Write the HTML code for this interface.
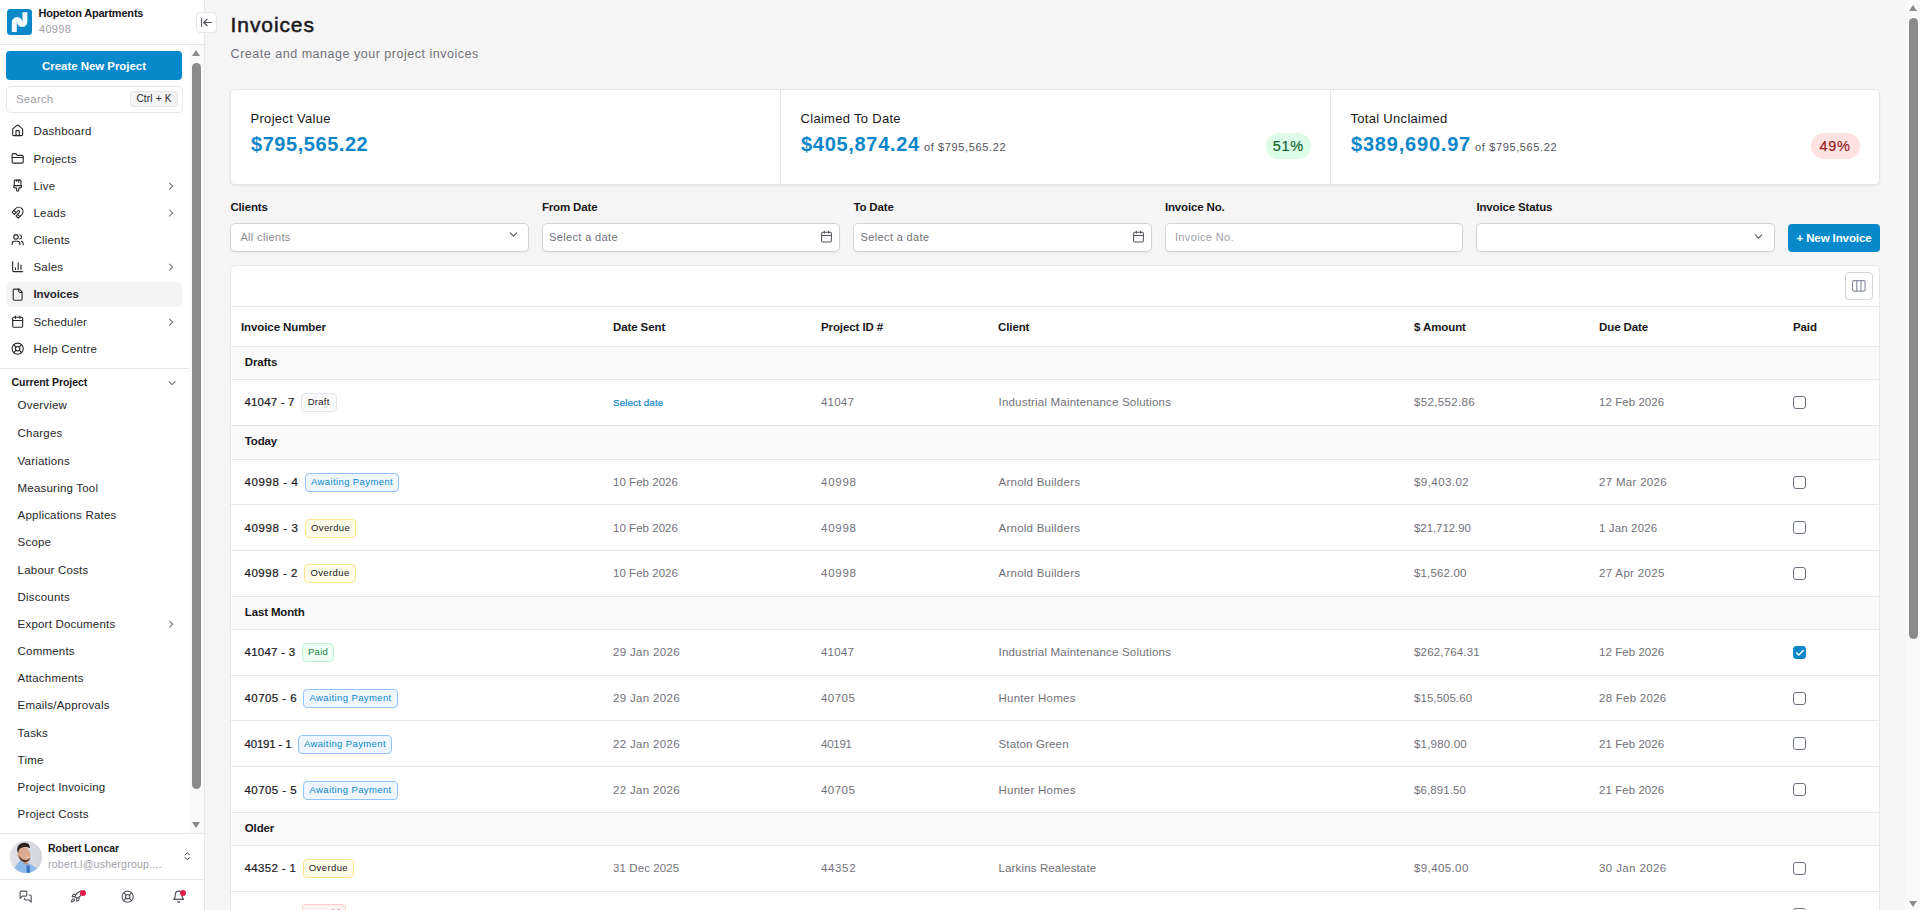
<!DOCTYPE html>
<html lang="en">
<head>
<meta charset="utf-8">
<title>Invoices</title>
<style>
*{box-sizing:border-box;margin:0;padding:0}
html,body{width:1920px;height:910px;overflow:hidden}
body{font-family:"Liberation Sans",Arial,sans-serif;background:#f5f5f5;color:#18181b;position:relative;font-size:12px}
svg.ic{fill:none;stroke:currentColor;stroke-width:2;stroke-linecap:round;stroke-linejoin:round;display:block}
.abs{position:absolute}

/* ---------- sidebar ---------- */
#side{position:absolute;left:0;top:0;width:205px;height:910px;background:#fff;border-right:1px solid #e5e7eb}
#side .hd{position:absolute;left:0;top:0;width:204px;height:45px;border-bottom:1px solid #e5e7eb}
#logo{position:absolute;left:6.550px;top:9px;width:25.300px;height:26px;border-radius:3.500px;background:#0b88c8;overflow:hidden}
.pname{position:absolute;left:38.500px;top:6px;font-size:11px;font-weight:700;color:#18181b;line-height:14px;white-space:nowrap;letter-spacing:-.2px}
.pnum{position:absolute;left:39px;top:22px;font-size:11px;color:#a1a1aa;line-height:14px;letter-spacing:.3px}
#collapse{position:absolute;left:196px;top:12px;width:21px;height:21px;border:1px solid #e5e7eb;border-radius:4px;background:#fff;color:#52525b;z-index:5}
#collapse svg{position:absolute;left:3px;top:3px}
#newproj{position:absolute;left:6px;top:51px;width:176px;height:29px;border-radius:4px;background:#0789cb;color:#fff;font-weight:700;font-size:11.500px;text-align:center;line-height:31px;letter-spacing:-.05px}
#search{position:absolute;left:5.500px;top:86px;width:177px;height:26.500px;border:1px solid #e5e7eb;border-radius:5px;background:#fff}
#search .ph{position:absolute;left:9.500px;top:4.500px;font-size:11.500px;line-height:14px;color:#a1a1aa;letter-spacing:.15px}
#search .kbd{position:absolute;right:3.500px;top:3.500px;height:16px;width:48px;border:1px solid #e5e7eb;border-radius:3px;background:#f4f4f5;font-size:10px;line-height:14px;text-align:center;color:#27272a;letter-spacing:.2px}
.nav{position:absolute;left:6px;width:176px;height:25px;border-radius:5px;color:#27272a;font-size:11.500px;line-height:26px;letter-spacing:.2px}
.nav.act{background:#f4f4f5;font-weight:700;letter-spacing:-.1px}
.nav svg.i{position:absolute;left:5px;top:5.850px;color:#27272a}
.nav span{position:absolute;left:27.500px;top:0;white-space:nowrap}
.nav svg.ch{position:absolute;right:4.400px;top:7.400px;color:#71717a}
.nav.act span{top:-1px}
.sub{position:absolute;left:6px;width:176px;height:25px;color:#27272a;font-size:11.500px;line-height:26px;letter-spacing:.2px}
.sub span{position:absolute;left:11.600px;top:0;white-space:nowrap}
.sub svg.ch{position:absolute;right:4.400px;top:7.400px;color:#71717a}
#sdiv{position:absolute;left:0;top:368px;width:190px;height:1px;background:#e5e7eb}
#cur{position:absolute;left:11.500px;top:375px;font-size:10.500px;font-weight:700;line-height:14px;color:#18181b;letter-spacing:-.05px}
#curch{position:absolute;left:165.600px;top:377.200px;color:#71717a}
/* sidebar scrollbar */
#sb{position:absolute;left:189px;top:45px;width:15px;height:788px;background:#fafafa}
#sb .th{position:absolute;left:3px;top:18px;width:9px;height:726px;border-radius:5px;background:#8b8b8b}
.tri-up{position:absolute;width:0;height:0;border-left:4.500px solid transparent;border-right:4.500px solid transparent;border-bottom:6.500px solid #8b8b8b}
.tri-dn{position:absolute;width:0;height:0;border-left:4.500px solid transparent;border-right:4.500px solid transparent;border-top:6.500px solid #8b8b8b}
#user{position:absolute;left:0;top:833px;width:204px;height:47px;border-top:1px solid #e5e7eb;border-bottom:1px solid #e5e7eb}
#avatar{position:absolute;left:10px;top:7px;width:32px;height:32px;border-radius:50%;overflow:hidden;background:#d9dbe0}
#user .n{position:absolute;left:48px;top:7px;font-size:10.500px;font-weight:700;line-height:14px;color:#18181b;letter-spacing:-.06px}
#user .e{position:absolute;left:48px;top:23px;font-size:10.500px;line-height:14px;color:#a1a1aa;letter-spacing:.25px}
#user>svg{position:absolute;left:182.250px;top:17px;color:#3f3f46}
.bi{position:absolute;top:889.850px;color:#52525b}
.dot{position:absolute;width:6px;height:6px;border-radius:50%;background:#e11d48}

/* ---------- main ---------- */
#title{position:absolute;left:230.600px;top:10px;font-size:21px;font-weight:400;-webkit-text-stroke:.5px #18181b;line-height:30px;color:#18181b;letter-spacing:.9px}
#subt{position:absolute;left:230.600px;top:45px;font-size:12.500px;line-height:18px;color:#71717a;letter-spacing:.52px;white-space:nowrap}
#stats{position:absolute;left:230px;top:89px;width:1650px;height:96px;background:#fff;border:1px solid #e5e7eb;border-radius:5px;box-shadow:0 1px 2px rgba(0,0,0,.08)}
#stats .col{position:absolute;top:0;height:94px;width:550px}
#stats .col+.col{border-left:1px solid #e5e7eb}
#stats .l{position:absolute;left:19.500px;top:20px;font-size:13px;line-height:18px;color:#18181b;letter-spacing:.3px;white-space:nowrap}
#stats .v{position:absolute;left:20px;top:40px;font-size:20px;line-height:28px;font-weight:700;color:#0b87c9;white-space:nowrap;letter-spacing:.55px}
#stats .v small{font-size:11px;font-weight:400;color:#52525b;letter-spacing:.63px;margin-left:4px}
.pct{position:absolute;top:43px;height:26px;width:45.500px;border-radius:14px;font-size:14.500px;line-height:27.500px;text-align:center;letter-spacing:.6px;-webkit-text-stroke:.2px}
.pct.pg{background:#dcfce7;color:#166534}
.pct.pr{background:#fee2e2;color:#991b1b}
#filters{position:absolute;left:230.400px;top:198px;width:1649.600px;height:56px;display:flex;gap:13.400px}
.f{flex:1 1 0;position:relative}
.f label{position:absolute;left:0;top:2px;font-size:11.500px;font-weight:700;line-height:14px;color:#18181b;white-space:nowrap;letter-spacing:-.15px}
.f .inp{position:absolute;left:0;right:0;top:25px;height:29px;border:1px solid #d1d5db;border-radius:5px;background:#fff;box-shadow:0 1px 2px rgba(0,0,0,.05)}
.f .inp span{position:absolute;left:9px;top:6px;font-size:11px;line-height:15px;color:#8b8b93;letter-spacing:.35px;white-space:nowrap}
.f .inp svg{position:absolute;color:#52525b;stroke-width:1.850}
#newinv{flex:0 0 92px;position:relative}
#newinv div{position:absolute;left:0;top:26px;width:92px;height:28px;border-radius:4px;background:#0789cb;color:#fff;font-size:11.500px;font-weight:700;line-height:29px;text-align:center;white-space:nowrap;letter-spacing:-.1px}
#card{position:absolute;left:230px;top:265px;width:1650px;height:700px;background:#fff;border:1px solid #e5e7eb;border-radius:6px;overflow:hidden}
#colbtn{position:absolute;left:1614px;top:6px;width:27.500px;height:27.500px;border:1px solid #d4d4d8;border-radius:4px;color:#52525b}
#colbtn svg{position:absolute;left:6.150px;top:7.050px}
.hr{position:absolute;left:0;width:1648px;border-top:1px solid #e5e7eb}
.th{position:absolute;top:0;font-size:11.500px;font-weight:700;line-height:40px;color:#18181b;white-space:nowrap;letter-spacing:-.1px}
.g{position:absolute;left:0;width:1648px;height:34px;border-top:1px solid #e5e7eb;background:#fafafa;font-size:11.500px;font-weight:700;line-height:31px;color:#18181b;padding-left:13.800px;letter-spacing:-.15px}
.r{position:absolute;left:0;width:1648px;height:47px;border-top:1px solid #e5e7eb;background:#fff;font-size:11.500px;line-height:44px;color:#71717a;letter-spacing:.1px}
.r>span{position:absolute;top:0;white-space:nowrap}
.r u{text-decoration:none}
.r .n{left:13.500px;color:#18181b;font-size:11.500px;letter-spacing:.2px;-webkit-text-stroke:.2px}
.r .d{left:382px;letter-spacing:0}.r .p{left:590px;letter-spacing:.5px}.r .c{left:767.500px;letter-spacing:.17px}.r .a{left:1183px;letter-spacing:.32px}.r .u{left:1368px;letter-spacing:.05px}
.r .d a{color:#0b87c9;font-size:9.800px;letter-spacing:.12px;-webkit-text-stroke:.2px}
.bd{display:inline-block;vertical-align:middle;position:relative;top:-.500px;margin-left:6.200px;height:19px;line-height:16.500px;padding:0 5.300px;border:1px solid;border-radius:4px;font-size:9.500px;font-weight:400;letter-spacing:.3px;-webkit-text-stroke:0}
.bd.dr{border-color:#e5e7eb;background:#fafafa;color:#18181b;padding:0 5.900px}
.bd.aw{border-color:#93c5fd;background:#eff6ff;color:#0b87c9;letter-spacing:.39px}
.bd.ov{border-color:#fde68a;background:#fefce8;color:#18181b;letter-spacing:.39px}
.bd.pd{border-color:#bbf7d0;background:#f0fdf4;color:#15803d}
.bd.rj{border-color:#fecaca;background:#fef2f2;color:#b91c1c;width:44.800px;text-align:center}
.cb{position:absolute;left:1562px;top:16px;width:13px;height:13px;border:1px solid #6b7280;border-radius:3px;background:#fff}
.cb.on{background:#0b87c9;border-color:#0b87c9}
.cb.on svg{position:absolute;left:.500px;top:.500px;color:#fff}
#psb{position:absolute;left:1906px;top:0;width:14px;height:910px;background:#fafafa}
#psb .t{position:absolute;left:3px;top:18px;width:9px;height:621px;border-radius:5px;background:#8b8b8b}
</style>
</head>
<body>
<div id="side">
  <div class="hd">
    <div id="logo"><svg width="25" height="26" viewBox="0 0 25 26"><path d="M4.800 23V13.200A5.300 5.300 0 0 1 15.400 13.200V3.200H20.400V12.800A5.300 5.300 0 0 1 9.800 12.800V23Z" fill="#f1f8fd"/><path d="M9.800 9.500V13" stroke="#cfe5f4" stroke-width=".5" fill="none"/></svg></div>
    <div class="pname">Hopeton Apartments</div>
    <div class="pnum">40998</div>
  </div>
  <div id="newproj">Create New Project</div>
  <div id="search"><div class="ph">Search</div><div class="kbd">Ctrl + K</div></div>
  <div class="nav" style="top:118px"><svg class="ic i" width="13.300" height="13.300" viewBox="0 0 24 24"><path d="M15 21v-8a1 1 0 0 0-1-1h-4a1 1 0 0 0-1 1v8"/><path d="M3 10a2 2 0 0 1 .709-1.528l7-5.999a2 2 0 0 1 2.582 0l7 5.999A2 2 0 0 1 21 10v9a2 2 0 0 1-2 2H5a2 2 0 0 1-2-2z"/></svg><span>Dashboard</span></div>
  <div class="nav" style="top:146px"><svg class="ic i" width="13.300" height="13.300" viewBox="0 0 24 24"><path d="M20 20a2 2 0 0 0 2-2V8a2 2 0 0 0-2-2h-7.9a2 2 0 0 1-1.69-.9L9.6 3.9A2 2 0 0 0 7.93 3H4a2 2 0 0 0-2 2v13a2 2 0 0 0 2 2Z"/><path d="M2 10h20"/></svg><span>Projects</span></div>
  <div class="nav" style="top:173px"><svg class="ic i" width="13.300" height="13.300" viewBox="0 0 24 24"><path d="M10 2v2"/><path d="M14 2v4"/><path d="M17 2a1 1 0 0 1 1 1v9H6V3a1 1 0 0 1 1-1z"/><path d="M6 12a1 1 0 0 0-1 1v1a2 2 0 0 0 2 2h2a1 1 0 0 1 1 1v2.9a2 2 0 1 0 4 0V17a1 1 0 0 1 1-1h2a2 2 0 0 0 2-2v-1a1 1 0 0 0-1-1"/></svg><span>Live</span><svg class="ic ch" width="12.250" height="12.250" viewBox="0 0 24 24"><path d="m9 18 6-6-6-6"/></svg></div>
  <div class="nav" style="top:200px"><svg class="ic i" width="13.300" height="13.300" viewBox="0 0 24 24"><path d="m6 15-4-4 6.75-6.77a7.79 7.79 0 0 1 11 11L13 22l-4-4 6.39-6.36a2.14 2.14 0 0 0-3-3L6 15"/><path d="m5 8 4 4"/><path d="m12 15 4 4"/></svg><span>Leads</span><svg class="ic ch" width="12.250" height="12.250" viewBox="0 0 24 24"><path d="m9 18 6-6-6-6"/></svg></div>
  <div class="nav" style="top:227px"><svg class="ic i" width="13.300" height="13.300" viewBox="0 0 24 24"><path d="M16 21v-2a4 4 0 0 0-4-4H6a4 4 0 0 0-4 4v2"/><circle cx="9" cy="7" r="4"/><path d="M22 21v-2a4 4 0 0 0-3-3.87"/><path d="M16 3.13a4 4 0 0 1 0 7.75"/></svg><span>Clients</span></div>
  <div class="nav" style="top:254px"><svg class="ic i" width="13.300" height="13.300" viewBox="0 0 24 24"><path d="M3 3v16a2 2 0 0 0 2 2h16"/><path d="M18 17V9"/><path d="M13 17V5"/><path d="M8 17v-3"/></svg><span>Sales</span><svg class="ic ch" width="12.250" height="12.250" viewBox="0 0 24 24"><path d="m9 18 6-6-6-6"/></svg></div>
  <div class="nav act" style="top:282px"><svg class="ic i" width="13.300" height="13.300" viewBox="0 0 24 24"><path d="M15 2H6a2 2 0 0 0-2 2v16a2 2 0 0 0 2 2h12a2 2 0 0 0 2-2V7Z"/><path d="M14 2v4a2 2 0 0 0 2 2h4"/></svg><span>Invoices</span></div>
  <div class="nav" style="top:309px"><svg class="ic i" width="13.300" height="13.300" viewBox="0 0 24 24"><path d="M8 2v4"/><path d="M16 2v4"/><rect width="18" height="18" x="3" y="4" rx="2"/><path d="M3 10h18"/></svg><span>Scheduler</span><svg class="ic ch" width="12.250" height="12.250" viewBox="0 0 24 24"><path d="m9 18 6-6-6-6"/></svg></div>
  <div class="nav" style="top:336px"><svg class="ic i" width="13.300" height="13.300" viewBox="0 0 24 24"><circle cx="12" cy="12" r="10"/><path d="m4.93 4.93 4.24 4.24"/><path d="m14.83 9.17 4.24-4.24"/><path d="m14.83 14.83 4.24 4.24"/><path d="m9.17 14.83-4.24 4.24"/><circle cx="12" cy="12" r="4"/></svg><span>Help Centre</span></div>
  <div id="sdiv"></div>
  <div id="cur">Current Project</div>
  <svg id="curch" class="ic" width="12.250" height="12.250" viewBox="0 0 24 24"><path d="m6 9 6 6 6-6"/></svg>
  <div class="sub" style="top:392px"><span>Overview</span></div>
  <div class="sub" style="top:420px"><span>Charges</span></div>
  <div class="sub" style="top:448px"><span>Variations</span></div>
  <div class="sub" style="top:475px"><span>Measuring Tool</span></div>
  <div class="sub" style="top:502px"><span>Applications Rates</span></div>
  <div class="sub" style="top:529px"><span>Scope</span></div>
  <div class="sub" style="top:557px"><span>Labour Costs</span></div>
  <div class="sub" style="top:584px"><span>Discounts</span></div>
  <div class="sub" style="top:611px"><span>Export Documents</span><svg class="ic ch" width="12.250" height="12.250" viewBox="0 0 24 24"><path d="m9 18 6-6-6-6"/></svg></div>
  <div class="sub" style="top:638px"><span>Comments</span></div>
  <div class="sub" style="top:665px"><span>Attachments</span></div>
  <div class="sub" style="top:692px"><span>Emails/Approvals</span></div>
  <div class="sub" style="top:720px"><span>Tasks</span></div>
  <div class="sub" style="top:747px"><span>Time</span></div>
  <div class="sub" style="top:774px"><span>Project Invoicing</span></div>
  <div class="sub" style="top:801px"><span>Project Costs</span></div>
  <div id="sb"><div class="tri-up" style="left:3px;top:5.300px"></div><div class="th"></div><div class="tri-dn" style="left:3px;top:777.200px"></div></div>
  <div id="user">
    <div id="avatar"><svg width="32" height="33" viewBox="0 0 32 33"><defs><linearGradient id="avbg" x1="0" x2="1"><stop offset="0" stop-color="#dfe1e6"/><stop offset="1" stop-color="#d3d6dc"/></linearGradient></defs><rect width="32" height="33" fill="url(#avbg)"/><path d="M3.500 28.500L10 19.500L15 21L19.500 22.500L27.500 27.500L24 33H6Z" fill="#8fb9ea"/><path d="M12.500 18.500L17.500 19.500L18 24L14 22.500Z" fill="#c99478"/><path d="M16.200 24.400L19.600 24.200L20.200 33H16.800Z" fill="#3e76c6"/><ellipse cx="13.900" cy="13.400" rx="6.300" ry="7.500" transform="rotate(-12 13.900 13.400)" fill="#dbaa90"/><path d="M7.400 10.500C6.300 4.500 10.500 1.600 15 1.800C18.600 2 20.200 4.600 19.900 7.200C17 5.400 12.500 5.600 10 7.600C8.900 8.600 8.500 10.500 8.300 12Z" fill="#2a2421"/><path d="M8.400 14C9.300 19 12.500 21.600 16 21.100C18.600 20.600 20.100 18.600 20.300 16.400C18.500 19 15 19.600 12.500 18.200C10.500 17.100 9.400 15.500 8.400 14Z" fill="#4a372e"/><path d="M14.800 15.400Q17 16.800 19.200 15Q17.600 18 14.800 15.400Z" fill="#fff"/></svg></div>
    <div class="n">Robert Loncar</div>
    <div class="e">robert.l@ushergroup....</div>
    <svg class="ic" width="10.500" height="10.500" viewBox="0 0 24 24" style="stroke-width:2.200"><path d="m7 15 5 5 5-5"/><path d="m7 9 5-5 5 5"/></svg>
  </div>
  <svg class="ic bi" style="left:18.850px" width="13.300" height="13.300" viewBox="0 0 24 24"><path d="M14 9a2 2 0 0 1-2 2H6l-4 4V4a2 2 0 0 1 2-2h8a2 2 0 0 1 2 2z"/><path d="M18 9h2a2 2 0 0 1 2 2v11l-4-4h-6a2 2 0 0 1-2-2v-1"/></svg>
  <svg class="ic bi" style="left:69.850px" width="13.300" height="13.300" viewBox="0 0 24 24"><path d="M4.500 16.500c-1.500 1.260-2 5-2 5s3.740-.5 5-2c.71-.84.7-2.130-.09-2.910a2.180 2.180 0 0 0-2.910-.09z"/><path d="m12 15-3-3a22 22 0 0 1 2-3.950A12.880 12.880 0 0 1 22 2c0 2.720-.78 7.500-6 11a22.350 22.350 0 0 1-4 2z"/><path d="M9 12H4s.55-3.030 2-4c1.620-1.080 5 0 5 0"/><path d="M12 15v5s3.030-.55 4-2c1.080-1.620 0-5 0-5"/></svg>
  <svg class="ic bi" style="left:120.850px" width="13.300" height="13.300" viewBox="0 0 24 24"><circle cx="12" cy="12" r="10"/><path d="m4.93 4.93 4.24 4.24"/><path d="m14.83 9.17 4.24-4.24"/><path d="m14.83 14.83 4.24 4.24"/><path d="m9.17 14.83-4.24 4.24"/><circle cx="12" cy="12" r="4"/></svg>
  <svg class="ic bi" style="left:171.850px" width="13.300" height="13.300" viewBox="0 0 24 24"><path d="M6 8a6 6 0 0 1 12 0c0 7 3 9 3 9H3s3-2 3-9"/><path d="M10.300 21a1.940 1.940 0 0 0 3.400 0"/></svg>
  <div class="dot" style="left:80px;top:890px"></div>
  <div class="dot" style="left:180px;top:890px"></div>
</div>
<div id="collapse"><svg class="ic" width="13" height="13" viewBox="0 0 24 24"><path d="M3 19V5"/><path d="m13 6-6 6 6 6"/><path d="M7 12h14"/></svg></div>
<div id="title">Invoices</div>
<div id="subt">Create and manage your project invoices</div>
<div id="stats">
  <div class="col" style="left:0"><div class="l">Project Value</div><div class="v">$795,565.22</div></div>
  <div class="col" style="left:549px"><div class="l">Claimed To Date</div><div class="v" style="letter-spacing:.7px">$405,874.24<small>of $795,565.22</small></div><div class="pct pg" style="left:484.500px">51%</div></div>
  <div class="col" style="left:1099px"><div class="l">Total Unclaimed</div><div class="v" style="letter-spacing:.8px">$389,690.97<small>of $795,565.22</small></div><div class="pct pr" style="left:479.500px;width:49px">49%</div></div>
</div>
<div id="filters">
  <div class="f"><label>Clients</label><div class="inp"><span>All clients</span><svg class="ic" style="right:8px;top:4px" width="13" height="13" viewBox="0 0 24 24"><path d="m6 9 6 6 6-6"/></svg></div></div>
  <div class="f"><label>From Date</label><div class="inp"><span style="left:6.200px;color:#71717a">Select a date</span><svg class="ic" style="right:6px;top:5.800px" width="13" height="13" viewBox="0 0 24 24"><path d="M8 2v4"/><path d="M16 2v4"/><rect width="18" height="18" x="3" y="4" rx="2"/><path d="M3 10h18"/></svg></div></div>
  <div class="f"><label>To Date</label><div class="inp"><span style="left:6.200px;color:#71717a">Select a date</span><svg class="ic" style="right:6px;top:5.800px" width="13" height="13" viewBox="0 0 24 24"><path d="M8 2v4"/><path d="M16 2v4"/><rect width="18" height="18" x="3" y="4" rx="2"/><path d="M3 10h18"/></svg></div></div>
  <div class="f"><label>Invoice No.</label><div class="inp"><span style="color:#a1a1aa">Invoice No.</span></div></div>
  <div class="f"><label>Invoice Status</label><div class="inp"><svg class="ic" style="right:9px;top:6px" width="13" height="13" viewBox="0 0 24 24"><path d="m6 9 6 6 6-6"/></svg></div></div>
  <div id="newinv"><div>+ New Invoice</div></div>
</div>
<div id="card">
  <div id="colbtn"><svg width="14" height="12" viewBox="0 0 14 12" fill="none" stroke="#8a90a0" stroke-width="1.150"><rect x=".600" y=".600" width="12.500" height="10.500" rx="1.300"/><path d="M4.750 .600v10.500M9 .600v10.500"/></svg></div>
  <div class="hr" style="top:40px;height:41px">
    <span class="th" style="left:10px">Invoice Number</span><span class="th" style="left:382px">Date Sent</span><span class="th" style="left:590px">Project ID #</span><span class="th" style="left:767px">Client</span><span class="th" style="left:1183px">$ Amount</span><span class="th" style="left:1368px">Due Date</span><span class="th" style="left:1562px">Paid</span>
  </div>
  <div class="g" style="top:80px">Drafts</div>
  <div class="r" style="top:113px"><span class="n"><u style="letter-spacing:0.16px">41047 - 7</u><b class="bd dr">Draft</b></span><span class="d"><a>Select date</a></span><span class="p" style="letter-spacing:0.20px">41047</span><span class="c" style="letter-spacing:0.20px">Industrial Maintenance Solutions</span><span class="a" style="letter-spacing:0.33px">$52,552.86</span><span class="u" style="letter-spacing:0.06px">12 Feb 2026</span><i class="cb"></i></div>
  <div class="g" style="top:159px">Today</div>
  <div class="r" style="top:193px"><span class="n"><u style="letter-spacing:0.60px">40998 - 4</u><b class="bd aw">Awaiting Payment</b></span><span class="d" style="letter-spacing:0.03px">10 Feb 2026</span><span class="p" style="letter-spacing:0.74px">40998</span><span class="c" style="letter-spacing:0.25px">Arnold Builders</span><span class="a" style="letter-spacing:0.44px">$9,403.02</span><span class="u" style="letter-spacing:0.31px">27 Mar 2026</span><i class="cb"></i></div>
  <div class="r" style="top:238px;line-height:46px"><span class="n"><u style="letter-spacing:0.60px">40998 - 3</u><b class="bd ov">Overdue</b></span><span class="d" style="letter-spacing:0.03px">10 Feb 2026</span><span class="p" style="letter-spacing:0.74px">40998</span><span class="c" style="letter-spacing:0.25px">Arnold Builders</span><span class="a" style="letter-spacing:-0.07px">$21,712.90</span><span class="u" style="letter-spacing:0.13px">1 Jan 2026</span><i class="cb"></i></div>
  <div class="r" style="top:284px"><span class="n"><u style="letter-spacing:0.54px">40998 - 2</u><b class="bd ov">Overdue</b></span><span class="d" style="letter-spacing:0.03px">10 Feb 2026</span><span class="p" style="letter-spacing:0.74px">40998</span><span class="c" style="letter-spacing:0.25px">Arnold Builders</span><span class="a" style="letter-spacing:0.15px">$1,562.00</span><span class="u" style="letter-spacing:0.34px">27 Apr 2025</span><i class="cb"></i></div>
  <div class="g" style="top:330px">Last Month</div>
  <div class="r" style="top:363px"><span class="n"><u style="letter-spacing:0.26px">41047 - 3</u><b class="bd pd">Paid</b></span><span class="d" style="letter-spacing:0.34px">29 Jan 2026</span><span class="p" style="letter-spacing:0.20px">41047</span><span class="c" style="letter-spacing:0.20px">Industrial Maintenance Solutions</span><span class="a" style="letter-spacing:0.17px">$262,764.31</span><span class="u" style="letter-spacing:0.06px">12 Feb 2026</span><i class="cb on"><svg class="ic" width="10" height="10" viewBox="0 0 24 24" style="stroke-width:3.500"><path d="M20 6 9 17l-5-5"/></svg></i></div>
  <div class="r" style="top:409px"><span class="n"><u style="letter-spacing:0.44px">40705 - 6</u><b class="bd aw">Awaiting Payment</b></span><span class="d" style="letter-spacing:0.34px">29 Jan 2026</span><span class="p" style="letter-spacing:0.46px">40705</span><span class="c" style="letter-spacing:0.25px">Hunter Homes</span><span class="a" style="letter-spacing:0.06px">$15,505.60</span><span class="u" style="letter-spacing:0.26px">28 Feb 2026</span><i class="cb"></i></div>
  <div class="r" style="top:454px;line-height:46px"><span class="n"><u style="letter-spacing:-0.19px">40191 - 1</u><b class="bd aw">Awaiting Payment</b></span><span class="d" style="letter-spacing:0.34px">22 Jan 2026</span><span class="p" style="letter-spacing:-0.24px">40191</span><span class="c" style="letter-spacing:0.15px">Staton Green</span><span class="a" style="letter-spacing:0.19px">$1,980.00</span><span class="u" style="letter-spacing:0.06px">21 Feb 2026</span><i class="cb"></i></div>
  <div class="r" style="top:500px;line-height:46px"><span class="n"><u style="letter-spacing:0.44px">40705 - 5</u><b class="bd aw">Awaiting Payment</b></span><span class="d" style="letter-spacing:0.34px">22 Jan 2026</span><span class="p" style="letter-spacing:0.46px">40705</span><span class="c" style="letter-spacing:0.25px">Hunter Homes</span><span class="a" style="letter-spacing:0.10px">$6,891.50</span><span class="u" style="letter-spacing:0.06px">21 Feb 2026</span><i class="cb"></i></div>
  <div class="g" style="top:546px">Older</div>
  <div class="r" style="top:579px"><span class="n"><u style="letter-spacing:0.36px">44352 - 1</u><b class="bd ov">Overdue</b></span><span class="d" style="letter-spacing:0.09px">31 Dec 2025</span><span class="p" style="letter-spacing:0.64px">44352</span><span class="c" style="letter-spacing:0.14px">Larkins Realestate</span><span class="a" style="letter-spacing:0.39px">$9,405.00</span><span class="u" style="letter-spacing:0.38px">30 Jan 2026</span><i class="cb"></i></div>
  <div class="r" style="top:625px"><span class="n"><u style="letter-spacing:0.21px;margin-left:.500px">44145 - 1</u><b class="bd rj" style="top:-1.500px">Unpaid</b></span><span class="d" style="letter-spacing:-0.05px">16 Dec 2025</span><span class="p" style="letter-spacing:0.34px">44145</span><span class="c" style="letter-spacing:0.20px">Industrial Maintenance Solutions</span><span class="a" style="letter-spacing:-0.02px">$154,150.55</span><span class="u" style="letter-spacing:0.13px">15 Jan 2026</span><i class="cb"></i></div>
</div>
<div id="psb"><div class="tri-up" style="left:3px;top:5.300px"></div><div class="t"></div><div class="tri-dn" style="left:3px;top:901.200px"></div></div>
</body>
</html>
